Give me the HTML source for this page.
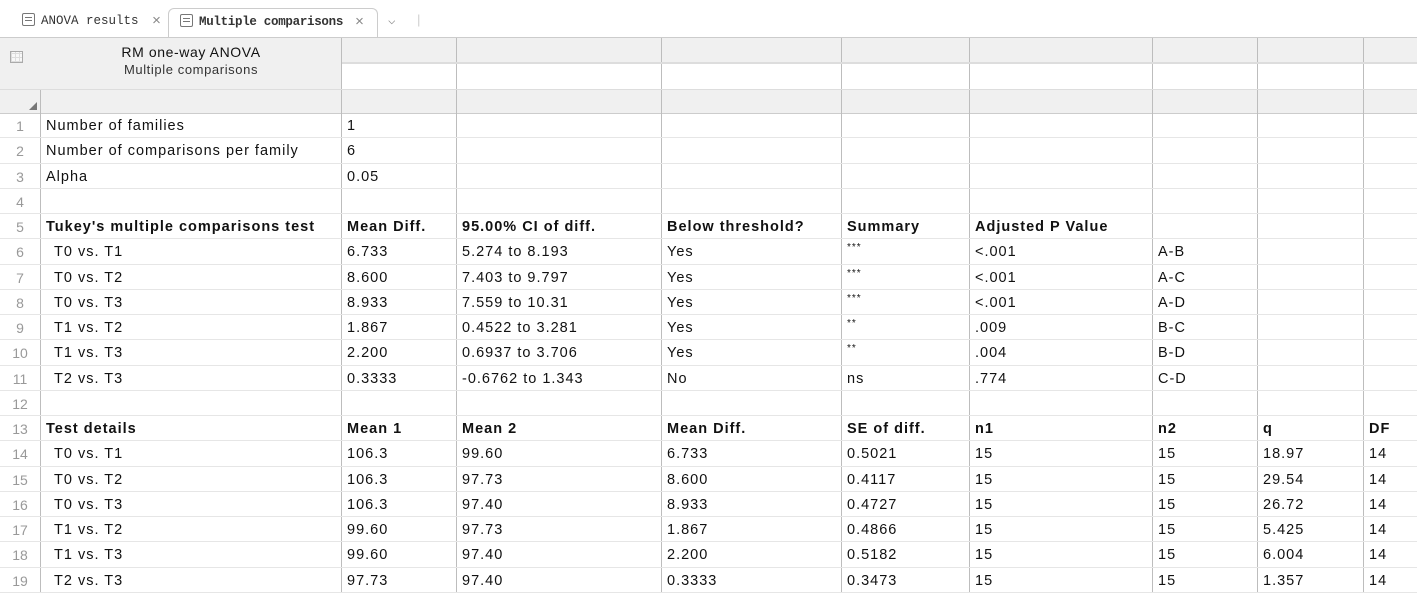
<!DOCTYPE html>
<html><head><style>
*{box-sizing:border-box;margin:0;padding:0}
body{width:1417px;height:593px;overflow:hidden;background:#fff;font-family:"Liberation Sans",Arial,sans-serif;font-size:14.5px;letter-spacing:1px;color:#111;position:relative}
.tabs{position:absolute;left:0;top:0;width:1417px;height:37px;background:#fff;font-family:"Liberation Mono",monospace;font-size:12.5px;letter-spacing:0;color:#333}
.tab{position:absolute;top:8px;height:29px;line-height:27px;white-space:nowrap}
.t2{border:1px solid #ccc;border-bottom:none;border-radius:6px 6px 0 0;background:#fff}
.ic{display:inline-block;width:13px;height:13px;border:1.3px solid #777;border-radius:2px;vertical-align:-2px;margin-right:6px;position:relative}
.ic:before,.ic:after{content:"";position:absolute;left:2px;right:2px;height:1px;background:#777;top:3px}
.ic:after{top:6px}
.row{display:flex;height:25.26px;border-bottom:1px solid #e6e6e6}
.c{border-right:1px solid #bdbdbd;height:100%;line-height:26px;padding-left:5px;white-space:nowrap;overflow:hidden}
.n{width:41px;color:#999;text-align:center;padding:0;letter-spacing:0;font-size:14px}
.w1{width:301px}.w2{width:115px}.w3{width:205px}.w4{width:180px}.w5{width:128px}.w6{width:183px}.w7{width:105px}.w8{width:106px}.w9{width:53px;border-right:none}
.b{font-weight:bold}
.i{padding-left:13px}
.s{font-size:10px;line-height:18px;letter-spacing:1px}
#grid{position:absolute;left:0;top:113px;width:1417px}
.hdr{position:absolute;left:0;top:37px;width:1417px;border-top:1px solid #ccc}
.g{background:#f0f0f0}
</style></head><body>
<div class="tabs">
<div class="tab" style="left:22px"><span class="ic"></span>ANOVA results<span style="color:#888;position:absolute;left:130px;font-size:15px">×</span></div>
<div class="tab t2" style="left:168px;width:210px;padding-left:11px"><span class="ic"></span><b style="letter-spacing:-0.3px">Multiple comparisons</b><span style="color:#888;position:absolute;left:186px;font-size:15px">×</span></div>
<div class="tab" style="left:388px;color:#888">⌵ <span style="margin-left:12px;color:#ccc">|</span></div>
</div>
<div class="hdr">
<div style="display:flex;height:52px;border-bottom:1px solid #ddd">
<div class="c g" style="width:342px;position:relative;text-align:center;line-height:17px;padding-top:6px;padding-left:41px;font-size:14px;letter-spacing:0.6px">
<div style="position:absolute;left:10px;top:13px;width:13px;height:12px;border:1px solid #aaa;background:repeating-linear-gradient(90deg,#ddd 0 1px,transparent 1px 4px),repeating-linear-gradient(0deg,#ddd 0 1px,#f8f8f8 1px 4px)"></div>
RM one-way ANOVA<br><span style="font-size:13px;color:#333">Multiple comparisons</span></div>
<div style="flex:1;display:flex;flex-direction:column">
<div style="display:flex;height:26px;border-bottom:2px solid #ddd" class="g"><div class="c w2"></div><div class="c w3"></div><div class="c w4"></div><div class="c w5"></div><div class="c w6"></div><div class="c w7"></div><div class="c w8"></div><div class="c w9"></div></div>
<div style="display:flex;flex:1"><div class="c w2"></div><div class="c w3"></div><div class="c w4"></div><div class="c w5"></div><div class="c w6"></div><div class="c w7"></div><div class="c w8"></div><div class="c w9"></div></div>
</div></div>
<div style="display:flex;height:24px;border-bottom:1px solid #ccc" class="g"><div class="c" style="width:41px;position:relative"><div style="position:absolute;right:3px;bottom:3px;width:0;height:0;border-left:8px solid transparent;border-bottom:8px solid #777"></div></div><div class="c w1"></div><div class="c w2"></div><div class="c w3"></div><div class="c w4"></div><div class="c w5"></div><div class="c w6"></div><div class="c w7"></div><div class="c w8"></div><div class="c w9"></div></div>
</div>
<div id="grid">
<div class="row"><div class="c n">1</div><div class="c w1">Number of families</div><div class="c w2">1</div><div class="c w3"></div><div class="c w4"></div><div class="c w5"></div><div class="c w6"></div><div class="c w7"></div><div class="c w8"></div><div class="c w9"></div></div>
<div class="row"><div class="c n">2</div><div class="c w1">Number of comparisons per family</div><div class="c w2">6</div><div class="c w3"></div><div class="c w4"></div><div class="c w5"></div><div class="c w6"></div><div class="c w7"></div><div class="c w8"></div><div class="c w9"></div></div>
<div class="row"><div class="c n">3</div><div class="c w1">Alpha</div><div class="c w2">0.05</div><div class="c w3"></div><div class="c w4"></div><div class="c w5"></div><div class="c w6"></div><div class="c w7"></div><div class="c w8"></div><div class="c w9"></div></div>
<div class="row"><div class="c n">4</div><div class="c w1"></div><div class="c w2"></div><div class="c w3"></div><div class="c w4"></div><div class="c w5"></div><div class="c w6"></div><div class="c w7"></div><div class="c w8"></div><div class="c w9"></div></div>
<div class="row b"><div class="c n" style="font-weight:normal">5</div><div class="c w1">Tukey's multiple comparisons test</div><div class="c w2">Mean Diff.</div><div class="c w3">95.00% CI of diff.</div><div class="c w4">Below threshold?</div><div class="c w5">Summary</div><div class="c w6">Adjusted P Value</div><div class="c w7"></div><div class="c w8"></div><div class="c w9"></div></div>
<div class="row"><div class="c n">6</div><div class="c w1 i">T0 vs. T1</div><div class="c w2">6.733</div><div class="c w3">5.274 to 8.193</div><div class="c w4">Yes</div><div class="c w5 s">***</div><div class="c w6">&lt;.001</div><div class="c w7">A-B</div><div class="c w8"></div><div class="c w9"></div></div>
<div class="row"><div class="c n">7</div><div class="c w1 i">T0 vs. T2</div><div class="c w2">8.600</div><div class="c w3">7.403 to 9.797</div><div class="c w4">Yes</div><div class="c w5 s">***</div><div class="c w6">&lt;.001</div><div class="c w7">A-C</div><div class="c w8"></div><div class="c w9"></div></div>
<div class="row"><div class="c n">8</div><div class="c w1 i">T0 vs. T3</div><div class="c w2">8.933</div><div class="c w3">7.559 to 10.31</div><div class="c w4">Yes</div><div class="c w5 s">***</div><div class="c w6">&lt;.001</div><div class="c w7">A-D</div><div class="c w8"></div><div class="c w9"></div></div>
<div class="row"><div class="c n">9</div><div class="c w1 i">T1 vs. T2</div><div class="c w2">1.867</div><div class="c w3">0.4522 to 3.281</div><div class="c w4">Yes</div><div class="c w5 s">**</div><div class="c w6">.009</div><div class="c w7">B-C</div><div class="c w8"></div><div class="c w9"></div></div>
<div class="row"><div class="c n">10</div><div class="c w1 i">T1 vs. T3</div><div class="c w2">2.200</div><div class="c w3">0.6937 to 3.706</div><div class="c w4">Yes</div><div class="c w5 s">**</div><div class="c w6">.004</div><div class="c w7">B-D</div><div class="c w8"></div><div class="c w9"></div></div>
<div class="row"><div class="c n">11</div><div class="c w1 i">T2 vs. T3</div><div class="c w2">0.3333</div><div class="c w3">-0.6762 to 1.343</div><div class="c w4">No</div><div class="c w5">ns</div><div class="c w6">.774</div><div class="c w7">C-D</div><div class="c w8"></div><div class="c w9"></div></div>
<div class="row"><div class="c n">12</div><div class="c w1"></div><div class="c w2"></div><div class="c w3"></div><div class="c w4"></div><div class="c w5"></div><div class="c w6"></div><div class="c w7"></div><div class="c w8"></div><div class="c w9"></div></div>
<div class="row b"><div class="c n" style="font-weight:normal">13</div><div class="c w1">Test details</div><div class="c w2">Mean 1</div><div class="c w3">Mean 2</div><div class="c w4">Mean Diff.</div><div class="c w5">SE of diff.</div><div class="c w6">n1</div><div class="c w7">n2</div><div class="c w8">q</div><div class="c w9">DF</div></div>
<div class="row"><div class="c n">14</div><div class="c w1 i">T0 vs. T1</div><div class="c w2">106.3</div><div class="c w3">99.60</div><div class="c w4">6.733</div><div class="c w5">0.5021</div><div class="c w6">15</div><div class="c w7">15</div><div class="c w8">18.97</div><div class="c w9">14</div></div>
<div class="row"><div class="c n">15</div><div class="c w1 i">T0 vs. T2</div><div class="c w2">106.3</div><div class="c w3">97.73</div><div class="c w4">8.600</div><div class="c w5">0.4117</div><div class="c w6">15</div><div class="c w7">15</div><div class="c w8">29.54</div><div class="c w9">14</div></div>
<div class="row"><div class="c n">16</div><div class="c w1 i">T0 vs. T3</div><div class="c w2">106.3</div><div class="c w3">97.40</div><div class="c w4">8.933</div><div class="c w5">0.4727</div><div class="c w6">15</div><div class="c w7">15</div><div class="c w8">26.72</div><div class="c w9">14</div></div>
<div class="row"><div class="c n">17</div><div class="c w1 i">T1 vs. T2</div><div class="c w2">99.60</div><div class="c w3">97.73</div><div class="c w4">1.867</div><div class="c w5">0.4866</div><div class="c w6">15</div><div class="c w7">15</div><div class="c w8">5.425</div><div class="c w9">14</div></div>
<div class="row"><div class="c n">18</div><div class="c w1 i">T1 vs. T3</div><div class="c w2">99.60</div><div class="c w3">97.40</div><div class="c w4">2.200</div><div class="c w5">0.5182</div><div class="c w6">15</div><div class="c w7">15</div><div class="c w8">6.004</div><div class="c w9">14</div></div>
<div class="row"><div class="c n">19</div><div class="c w1 i">T2 vs. T3</div><div class="c w2">97.73</div><div class="c w3">97.40</div><div class="c w4">0.3333</div><div class="c w5">0.3473</div><div class="c w6">15</div><div class="c w7">15</div><div class="c w8">1.357</div><div class="c w9">14</div></div>
</div>
</body></html>
